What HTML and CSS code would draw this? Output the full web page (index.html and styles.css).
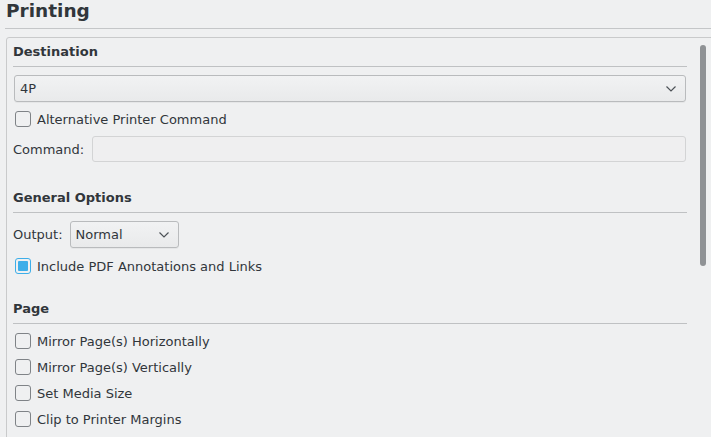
FILE: index.html
```html
<!DOCTYPE html>
<html>
<head>
<meta charset="utf-8">
<link rel="stylesheet" href="styles.css">
</head>
<body>
<div class="page">
  <h1 class="title">Printing</h1>
  <div class="frame">
    <div class="content">
      <section class="group">
        <h2 class="heading">Destination</h2>
        <div class="combo wide"><span>4P</span><svg class="chev" width="10" height="6" viewBox="0 0 10 6"><path d="M0.5 0.5 L5 5 L9.5 0.5" fill="none" stroke="#4d5257" stroke-width="1.2"/></svg></div>
        <label class="check"><span class="box"></span>Alternative Printer Command</label>
        <div class="field-row"><span class="field-label">Command:</span><div class="input"></div></div>
      </section>
      <section class="group general">
        <h2 class="heading">General Options</h2>
        <div class="field-row tight"><span class="field-label">Output:</span><div class="combo small"><span>Normal</span><svg class="chev" width="10" height="6" viewBox="0 0 10 6"><path d="M0.5 0.5 L5 5 L9.5 0.5" fill="none" stroke="#4d5257" stroke-width="1.2"/></svg></div></div>
        <label class="check annot"><span class="box checked"><span class="fill"></span></span>Include PDF Annotations and Links</label>
      </section>
      <section class="group pagegroup">
        <h2 class="heading">Page</h2>
        <div class="checks">
          <label class="check"><span class="box"></span>Mirror Page(s) Horizontally</label>
          <label class="check"><span class="box"></span>Mirror Page(s) Vertically</label>
          <label class="check"><span class="box"></span>Set Media Size</label>
          <label class="check"><span class="box"></span>Clip to Printer Margins</label>
        </div>
      </section>
    </div>
    <div class="scrolltrack"><div class="thumb"></div></div>
  </div>
</div>
</body>
</html>
```

FILE: styles.css
```css
html, body {
  margin: 0;
  padding: 0;
  background: #eff0f1;
  overflow: hidden;
  width: 711px;
  height: 437px;
}
body {
  font-family: "DejaVu Sans", sans-serif;
  font-size: 13px;
  color: #31363b;
}
.page {
  display: flex;
  flex-direction: column;
}
.title {
  margin: 0 0 0 5px;
  padding: 0 0 0 1px;
  font-size: 18.5px;
  font-weight: bold;
  line-height: 22px;
  height: 29px;
  border-bottom: 1px solid #c4c6c8;
  box-sizing: border-box;
}
.frame {
  margin-top: 8px;
  margin-left: 6px;
  width: 720px;
  height: 420px;
  border: 1px solid #c9cacb;
  border-radius: 3px;
  display: flex;
  box-sizing: border-box;
}
.content {
  width: 674px;
  margin-left: 6px;
  display: flex;
  flex-direction: column;
}
.group {
  display: flex;
  flex-direction: column;
}
.heading {
  margin: 5px 0 0 0;
  font-size: 13px;
  font-weight: bold;
  line-height: 18px;
  padding-bottom: 5px;
  border-bottom: 1px solid #bfc1c3;
}
.general .heading {
  margin-top: 27px;
}
.pagegroup .heading {
  margin-top: 23px;
}
.combo {
  box-sizing: border-box;
  height: 27px;
  border: 1px solid #b9bbbd;
  border-radius: 3px;
  background: linear-gradient(#f1f2f3, #e9eaeb);
  display: flex;
  align-items: center;
  justify-content: space-between;
  padding: 0 9px 0 5px;
  box-shadow: 0 1px 0 rgba(0,0,0,0.04);
}
.combo.wide {
  margin: 8px 1px 0 1px;
}
.combo.small {
  width: 109px;
}
.chev { display: block; }
.check {
  display: flex;
  align-items: center;
  height: 22px;
  margin-top: 6px;
  padding-left: 2px;
}
.check.annot {
  margin-top: 7px;
}
.box {
  box-sizing: border-box;
  width: 16px;
  height: 16px;
  border: 1px solid #7f8387;
  border-radius: 3px;
  background: #eff0f1;
  margin-right: 6px;
  display: flex;
  align-items: center;
  justify-content: center;
}
.box.checked {
  border-color: #3daee9;
}
.box .fill {
  width: 10px;
  height: 10px;
  background: #3daee9;
  border-radius: 1px;
}
.field-row {
  display: flex;
  align-items: center;
  gap: 8px;
  margin-top: 6px;
}
.field-row.tight {
  margin-top: 8px;
  gap: 7px;
}
.input {
  flex: 1;
  height: 26px;
  box-sizing: border-box;
  border: 1px solid #d3d4d5;
  border-radius: 3px;
  background: #efeff0;
  margin-right: 1px;
}
.checks {
  display: flex;
  flex-direction: column;
  margin-top: 2px;
}
.checks .check {
  margin-top: 4px;
}
.scrolltrack {
  margin-left: 13px;
  padding-top: 7px;
}
.thumb {
  width: 6px;
  height: 221px;
  border-radius: 3px;
  background: #8f9295;
}
```
